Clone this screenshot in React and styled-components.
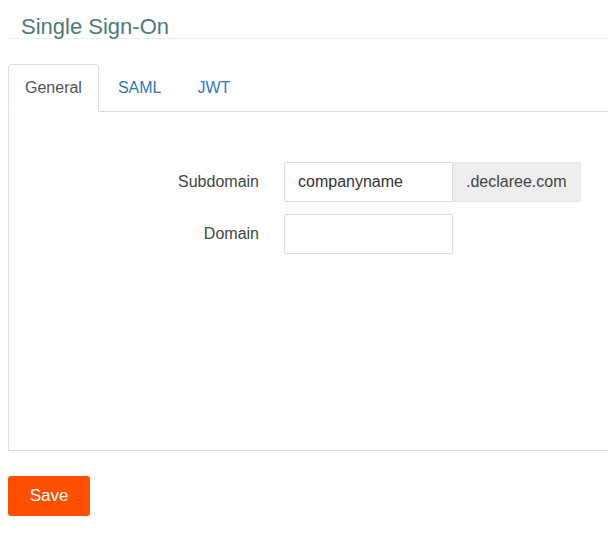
import React, { useState } from 'react';
import styled, { createGlobalStyle } from 'styled-components';

const GlobalStyle = createGlobalStyle`
  html, body {
    margin: 0;
    padding: 0;
    overflow: hidden;
    background: #fff;
  }
  body {
    padding: 8px;
    font-family: "Liberation Sans", Arial, sans-serif;
    color: #333;
  }
`;

const Page = styled.div`
  width: 610px;
`;

const Title = styled.h1`
  margin: 8px 0 0;
  padding: 0 0 0 13px;
  font-size: 22px;
  line-height: 22px;
  font-weight: normal;
  color: #4b7b7b;
  border-bottom: 1px solid #eee;
`;

const Tabs = styled.ul`
  display: flex;
  margin: 25px 0 0;
  padding: 0;
  list-style: none;
  border-bottom: 1px solid #ddd;
`;

const Tab = styled.li`
  margin: 0 2px -1px 0;
  padding: 12px 16px;
  font-size: 16px;
  line-height: 22px;
  border: 1px solid ${p => (p.active ? '#ddd' : 'transparent')};
  border-bottom-color: ${p => (p.active ? '#fff' : 'transparent')};
  border-radius: 4px 4px 0 0;
  background: ${p => (p.active ? '#fff' : 'transparent')};
  color: ${p => (p.active ? '#555' : '#2b7bb9')};
  cursor: pointer;
`;

const Panel = styled.div`
  height: 288px;
  padding-top: 50px;
  border: 1px solid #ddd;
  border-top: none;
`;

const Form = styled.div`
  display: grid;
  grid-template-columns: 250px auto;
  column-gap: 25px;
  row-gap: 12px;
  align-items: center;
  justify-content: start;
`;

const Label = styled.label`
  text-align: right;
  font-size: 16px;
  color: #444;
`;

const Group = styled.div`
  display: flex;
`;

const Input = styled.input`
  box-sizing: border-box;
  width: 169px;
  height: 40px;
  padding: 0 13px;
  border: 1px solid #ddd;
  border-radius: ${p => (p.joined ? '2px 0 0 2px' : '2px')};
  font-family: inherit;
  font-size: 16px;
  color: #333;
  outline: none;
`;

const Addon = styled.span`
  display: flex;
  align-items: center;
  height: 40px;
  box-sizing: border-box;
  padding: 0 13px;
  background: #eee;
  border: 1px solid #e6e6e6;
  border-left: none;
  border-radius: 0 2px 2px 0;
  font-size: 16px;
  color: #444;
`;

const SaveButton = styled.button`
  margin-top: 25px;
  width: 82px;
  height: 40px;
  border: none;
  border-radius: 3px;
  background: #ff5000;
  color: #fff;
  font-family: inherit;
  font-size: 17px;
  cursor: pointer;
`;

export default function App() {
  const [tab, setTab] = useState('General');
  const [sub, setSub] = useState('companyname');
  const [domain, setDomain] = useState('');

  return (
    <Page>
      <GlobalStyle />
      <Title>Single Sign-On</Title>
      <Tabs>
        {['General', 'SAML', 'JWT'].map(t => (
          <Tab key={t} active={tab === t} onClick={() => setTab(t)}>
            {t}
          </Tab>
        ))}
      </Tabs>
      <Panel>
        <Form>
          <Label>Subdomain</Label>
          <Group>
            <Input joined value={sub} onChange={e => setSub(e.target.value)} />
            <Addon>.declaree.com</Addon>
          </Group>
          <Label>Domain</Label>
          <Group>
            <Input value={domain} onChange={e => setDomain(e.target.value)} />
          </Group>
        </Form>
      </Panel>
      <SaveButton>Save</SaveButton>
    </Page>
  );
}
